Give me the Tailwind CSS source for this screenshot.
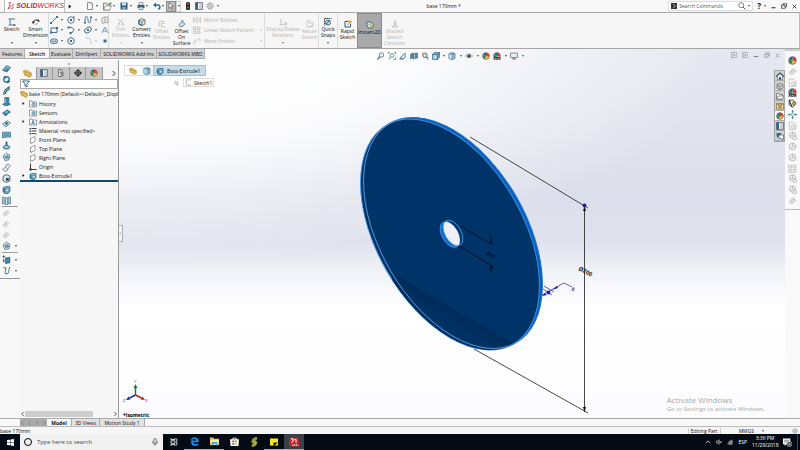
<!DOCTYPE html>
<html lang="en">

<head>
    <meta charset="UTF-8" />
    <meta name="viewport" content="width=device-width, initial-scale=1" />
    <title>base 170mm - SOLIDWORKS</title>
    <script src="https://cdn.jsdelivr.net/npm/@tailwindcss/browser@4"></script>
</head>

<body class="h-screen flex flex-col overflow-hidden bg-[#f5f5f5] font-['Open_Sans','Noto_Sans',sans-serif] text-[5px] leading-[6px] text-[#111]">

    <!-- Icon sprite -->
    <svg class="hidden" aria-hidden="true">
        <symbol id="caret" viewBox="0 0 6 6"><path d="M0 1h6L3 5z" fill="currentColor" /></symbol>
        <symbol id="right" viewBox="0 0 6 6"><path d="M1 0v6l4-3z" fill="currentColor" /></symbol>
        <symbol id="chev-l" viewBox="0 0 6 6"><path d="M4 0L1 3l3 3" fill="none" stroke="currentColor" /></symbol>
        <symbol id="chev-r" viewBox="0 0 6 6"><path d="M2 0l3 3-3 3" fill="none" stroke="currentColor" /></symbol>
        <symbol id="new" viewBox="0 0 16 16"><path d="M3 1h7l3 3v11H3z" fill="#fff" stroke="#555" stroke-width="1.3" /><path d="M10 1v3h3" fill="none" stroke="#555" /></symbol>
        <symbol id="open" viewBox="0 0 16 16"><path d="M1 2h5l1 2h5v10H1z" fill="#f6f3df" stroke="#555" stroke-width="1.3" /><path d="M4 7h11l-3 7H1z" fill="#fff" stroke="#555" /><path d="M10 6c0-4 2-5 4-5l-1-1 3 2-3 3V3c-1 0-1 1-1 3z" fill="#3b9a3b" /></symbol>
        <symbol id="save" viewBox="0 0 16 16"><path d="M1 1h14v14H1z" fill="#2d5f7f" /><path d="M4 1h8v6H4z" fill="#d5e5ee" /><path d="M5 10h6v5H5z" fill="#8eb4c9" /></symbol>
        <symbol id="print" viewBox="0 0 16 16"><path d="M4 1h8v5H4z" fill="#fff" stroke="#345" /><path d="M1 6h14v6H1z" fill="#2f6a89" /><path d="M4 10h8v5H4z" fill="#dce9f0" stroke="#345" /></symbol>
        <symbol id="undo" viewBox="0 0 16 16"><path d="M3 6h7c5 0 5 8 0 8" fill="none" stroke="#2c6e93" stroke-width="3" /><path d="M0 6l6-5v10z" fill="#2c6e93" /></symbol>
        <symbol id="cursor" viewBox="0 0 16 16"><path d="M4 1v12l3-3 2 5 2-1-2-5h4z" fill="#fff" stroke="#444" stroke-width="1.2" /></symbol>
        <symbol id="traffic" viewBox="0 0 16 16"><rect x="4" y="0" width="8" height="16" rx="3" fill="#222" /><circle cx="8" cy="4" r="2.5" fill="#c73a30" /><circle cx="8" cy="11" r="2.5" fill="#3d7f48" /></symbol>
        <symbol id="list" viewBox="0 0 16 16"><path d="M1 1h14v14H1z" fill="#fff" stroke="#557" stroke-width="1.5" /><path d="M1 1h5v14H1z" fill="#2f6580" /><path d="M8 4h6M8 8h6M8 12h6" stroke="#678" stroke-width="1.4" /></symbol>
        <symbol id="gear" viewBox="0 0 16 16"><circle cx="8" cy="8" r="6" fill="none" stroke="#777" stroke-width="2" stroke-dasharray="3 1" /><circle cx="8" cy="8" r="3" fill="none" stroke="#777" stroke-width="1.4" /></symbol>
        <symbol id="glass" viewBox="0 0 16 16"><circle cx="6.500" cy="6.500" r="5" fill="none" stroke="#555" stroke-width="1.5" /><path d="M10 10l5 5" stroke="#555" stroke-width="2" /></symbol>
        <symbol id="min" viewBox="0 0 16 16"><path d="M2 12h12" stroke="currentColor" stroke-width="3" /></symbol>
        <symbol id="restore" viewBox="0 0 16 16"><path d="M1 6h10v8H1zM5 6V2h10v8h-4" fill="none" stroke="currentColor" stroke-width="1.8" /></symbol>
        <symbol id="close" viewBox="0 0 16 16"><path d="M2 2l12 12M14 2L2 14" stroke="currentColor" stroke-width="2.400" /></symbol>
        <symbol id="pane" viewBox="0 0 16 16"><path d="M1 1h14v14H1zM5 1v14" fill="none" stroke="currentColor" stroke-width="1.4" /><path d="M8 5v6l4-3z" fill="currentColor" /></symbol>
        <symbol id="sketch" viewBox="0 0 16 16"><path d="M14 2H4v12h10M1 2h3M1 14h3" fill="none" stroke="#2f6f90" stroke-width="1.8" /><path d="M11 14h4" stroke="#222" stroke-width="2" /></symbol>
        <symbol id="dim" viewBox="0 0 16 16"><path d="M2 9a7 6 0 0 1 12-3" fill="none" stroke="#222" stroke-width="2" /><path d="M1 12V6l5 3zM12 2l4 5h-5z" fill="#222" /><path d="M7 14l4-4" stroke="#2f6f90" stroke-width="1.6" /></symbol>
        <symbol id="line" viewBox="0 0 16 16"><path d="M2 14L14 2" stroke="#34546a" stroke-width="1.6" /><path d="M0 12h4v4H0zM12 0h4v4h-4z" fill="#2f6f90" /></symbol>
        <symbol id="circle" viewBox="0 0 16 16"><circle cx="8" cy="8" r="6.500" fill="none" stroke="#34607a" stroke-width="1.6" /><path d="M6 6h4v4H6zM12 1h3v3h-3z" fill="#2f6f90" /></symbol>
        <symbol id="spline" viewBox="0 0 16 16"><path d="M2 14C2-6 7 0 8 8s6 9 6-6" fill="none" stroke="#34607a" stroke-width="1.8" /><path d="M0 12h4v3H0zM12 1h4v3h-4z" fill="#2f6f90" /></symbol>
        <symbol id="planes" viewBox="0 0 16 16"><path d="M2 4l6-2v11l-6 2zM8 2h6v11H8" fill="none" stroke="#888" stroke-width="1.4" /><path d="M4 8h8" stroke="#aaa" stroke-width="1.2" /></symbol>
        <symbol id="rect" viewBox="0 0 16 16"><path d="M2 4h12v9H2z" fill="none" stroke="#34607a" stroke-width="1.8" /><path d="M0 11h4v4H0zM12 2h4v4h-4z" fill="#2f6f90" /></symbol>
        <symbol id="arc" viewBox="0 0 16 16"><path d="M3 3c12-2 14 9 4 11" fill="none" stroke="#34607a" stroke-width="1.8" /><path d="M1 1h4v4H1zM5 12h4v4H5z" fill="#2f6f90" /></symbol>
        <symbol id="ellipse" viewBox="0 0 16 16"><ellipse cx="8" cy="8" rx="7.500" ry="5" transform="rotate(-35 8 8)" fill="none" stroke="#34607a" stroke-width="1.8" /><path d="M6 6h4v4H6z" fill="#2f6f90" /></symbol>
        <symbol id="letter" viewBox="0 0 16 16"><path d="M2 14L8 2l6 12M4 10h8" fill="none" stroke="#6d93aa" stroke-width="1.8" /></symbol>
        <symbol id="slot" viewBox="0 0 16 16"><rect x="1" y="4" width="14" height="9" rx="4.500" fill="#c9dce6" stroke="#34607a" stroke-width="1.6" /><path d="M4 8.500h8" stroke="#2f6f90" stroke-width="2" stroke-dasharray="3 2" /></symbol>
        <symbol id="polygon" viewBox="0 0 16 16"><path d="M8 1l6 3.500v7L8 15l-6-3.500v-7z" fill="none" stroke="#34607a" stroke-width="1.8" /><path d="M6 6h4v4H6z" fill="#2f6f90" /></symbol>
        <symbol id="fillet" viewBox="0 0 16 16"><path d="M2 2h4c6 0 8 3 8 12" fill="none" stroke="#bbb" stroke-width="1.6" /></symbol>
        <symbol id="point" viewBox="0 0 16 16"><path d="M5 5h6v6H5z" fill="#2f6f90" /></symbol>
        <symbol id="trim" viewBox="0 0 16 16"><path d="M2 2l10 9M12 2L3 11" stroke="#c0c0c0" stroke-width="2" /><circle cx="4" cy="13" r="2" fill="none" stroke="#c0c0c0" stroke-width="1.5" /><circle cx="12" cy="13" r="2" fill="none" stroke="#c0c0c0" stroke-width="1.5" /></symbol>
        <symbol id="convert" viewBox="0 0 16 16"><path d="M2 4l6-3 6 3v8l-6 3-6-3zM2 4l6 3 6-3M8 7v8" fill="#dce8ef" stroke="#444" stroke-width="1.3" /><path d="M2 4v8l6 3" fill="none" stroke="#2f6f90" stroke-width="2.500" /></symbol>
        <symbol id="offset" viewBox="0 0 16 16"><path d="M13 3H2v11M13 7H7v7h8" fill="none" stroke="#c4c4c4" stroke-width="2" /></symbol>
        <symbol id="surface" viewBox="0 0 16 16"><path d="M2 9l6-6 6 5-6 6z" fill="#cfe1ea" stroke="#3a6d88" stroke-width="1.6" /><path d="M8 3V0l3 2M3 12l-1 3" stroke="#3a6d88" stroke-width="1.5" fill="none" /></symbol>
        <symbol id="mirror" viewBox="0 0 16 16"><path d="M1 3l5 5-5 5zM15 3l-5 5 5 5zM8 1v14" fill="none" stroke="#bbb" stroke-width="1.5" /></symbol>
        <symbol id="pattern" viewBox="0 0 16 16"><path d="M1 2h5v5H1zM9 2h5v5H9zM1 10h5v5H1zM9 10h5v5H9z" fill="none" stroke="#bbb" stroke-width="1.6" /></symbol>
        <symbol id="move" viewBox="0 0 16 16"><path d="M2 12c0-8 5-8 6-2M9 4h5v5M1 13h4" fill="none" stroke="#bbb" stroke-width="1.6" /></symbol>
        <symbol id="relations" viewBox="0 0 16 16"><path d="M4 2v11M1 13h8M10 8l5 5M15 8v6h-5" fill="none" stroke="#b8b8b8" stroke-width="1.7" /></symbol>
        <symbol id="repair" viewBox="0 0 16 16"><path d="M9 2H2v12h7M5 6h9v6H8l5 3" fill="none" stroke="#c0c0c0" stroke-width="1.7" /></symbol>
        <symbol id="snaps" viewBox="0 0 16 16"><path d="M1 1h14M1 1v14" stroke="#222" stroke-width="1.6" stroke-dasharray="3 1" /><circle cx="8" cy="9" r="5" fill="#cfe3ee" stroke="#245a78" stroke-width="1.8" /><path d="M4 13l8-9" stroke="#222" stroke-width="1.5" /></symbol>
        <symbol id="rapid" viewBox="0 0 16 16"><path d="M13 8v6H2V3h6" fill="none" stroke="#2b5d79" stroke-width="2" /><path d="M6 1h9v7l-3-2-5 5-1-2 4-4z" fill="#e0a336" /></symbol>
        <symbol id="instant" viewBox="0 0 16 16"><path d="M2 2h8l4 5v7H5L2 10z" fill="#cfe4ef" stroke="#24617f" stroke-width="1.7" /><path d="M6 6l8 7" stroke="#e0a336" stroke-width="3" /></symbol>
        <symbol id="contours" viewBox="0 0 16 16"><path d="M2 14l6-6 6 6zM6 6l2-5 3 5-3 4z" fill="#ddd" stroke="#bdbdbd" stroke-width="1.4" /></symbol>
        <!-- heads-up view icons -->
        <symbol id="zoomfit" viewBox="0 0 16 16"><circle cx="9" cy="6" r="4.500" fill="#e7f1f6" stroke="#557b90" stroke-width="1.7" /><path d="M6 9l-5 6" stroke="#557b90" stroke-width="2.500" /></symbol>
        <symbol id="zoomarea" viewBox="0 0 16 16"><circle cx="8" cy="7" r="4" fill="#e7f1f6" stroke="#557b90" stroke-width="1.5" /><path d="M5 10l-4 5M1 4V1h3M12 1h3v3M15 11v4h-4" fill="none" stroke="#557b90" stroke-width="1.6" /></symbol>
        <symbol id="prev" viewBox="0 0 16 16"><path d="M2 12L12 2l1 8-4 4z" fill="#d3e4ed" stroke="#46788f" stroke-width="1.6" /><path d="M1 14h8" stroke="#46788f" stroke-width="2" /></symbol>
        <symbol id="section" viewBox="0 0 16 16"><path d="M1 5l4-3v10l-4 2zM6 3l9-1v10l-9 2z" fill="#4a88a8" stroke="#2d5b73" /><path d="M9 3v10" stroke="#cbe0eb" stroke-width="1.500" /></symbol>
        <symbol id="annot" viewBox="0 0 16 16"><path d="M2 2h9l3 9H5z" fill="#f0dcae" stroke="#b98a45" stroke-width="1.5" /><circle cx="8" cy="7" r="3.500" fill="#eef5f8" stroke="#3b6f8b" stroke-width="1.4" /><path d="M10 10l5 5" stroke="#a05b3a" stroke-width="2" /></symbol>
        <symbol id="cube" viewBox="0 0 16 16"><path d="M1 5l4-4h10v9l-4 5H1z" fill="#7fb0c9" stroke="#2f617b" stroke-width="1.400" /><path d="M1 5h10v10M11 5l4-4" fill="none" stroke="#2f617b" stroke-width="1.400" /><path d="M2 6h8v8H2z" fill="#b7d4e2" /></symbol>
        <symbol id="cube3" viewBox="0 0 16 16"><path d="M8 1l6 2v10l-6 2-6-2V3z" fill="#8db9cf" stroke="#3f7893" stroke-width="1.3" /><path d="M2 3l6 2v10l-6-2z" fill="#d4e6ef" stroke="#3f7893" /><path d="M8 5l6-2" stroke="#3f7893" /></symbol>
        <symbol id="eye" viewBox="0 0 16 16"><path d="M1 8q7-8 14 0-7 7-14 0z" fill="#eee" stroke="#666" stroke-width="1.3" /><circle cx="8" cy="8" r="3" fill="#333" /></symbol>
        <symbol id="ball" viewBox="0 0 16 16"><circle cx="8" cy="8" r="7" fill="#f4f4f4" /><path d="M8 8V1a7 7 0 0 1 6.500 9z" fill="#d34337" /><path d="M8 8l6.500 2A7 7 0 0 1 6 14.700z" fill="#e3b53a" /><path d="M8 8l-2 6.700A7 7 0 0 1 1.500 6z" fill="#3c8b54" /><path d="M8 8L1.500 6A7 7 0 0 1 8 1z" fill="#2f6797" /><circle cx="8" cy="8" r="7" fill="none" stroke="#444" stroke-width=".8" /></symbol>
        <symbol id="scene" viewBox="0 0 16 16"><use href="#ball" /><path d="M0 15l4-5h9l3 5z" fill="#333" /><path d="M4 13h8" stroke="#ddd" stroke-width="1.5" stroke-dasharray="2 1" /></symbol>
        <symbol id="monitor" viewBox="0 0 16 16"><path d="M1 2h14v9H1z" fill="#e4edf2" stroke="#666" stroke-width="1.4" /><path d="M8 11v3M4 14h8" stroke="#666" stroke-width="1.8" /></symbol>
        <!-- feature icons -->
        <symbol id="part" viewBox="0 0 16 16"><path d="M1 4l5-2 4 3 4 2 1 5-4 3-4-3-4-1z" fill="#f0ca55" stroke="#a4781c" stroke-width="1.2" /><path d="M1 4l5 2v5M6 6l4-1M10 9l5-2" fill="none" stroke="#a4781c" /><circle cx="11" cy="11" r="1.800" fill="#fff3c0" stroke="#a4781c" /></symbol>
        <symbol id="f1" viewBox="0 0 16 16"><path d="M1 11l7-8 7 3-6 8z" fill="#4b8fae" stroke="#1f5674" stroke-width="1.3" /><path d="M4 10l5-5 4 2" stroke="#d2e6ef" fill="none" stroke-width="1.3" /></symbol>
        <symbol id="f2" viewBox="0 0 16 16"><circle cx="8" cy="8" r="5" fill="#deedf4" stroke="#3a7897" stroke-width="2.600" /><path d="M3 2l5 1-3 4zM10 15l4-4-5-1z" fill="#1f5674" /></symbol>
        <symbol id="f3" viewBox="0 0 16 16"><path d="M2 13c5 1 3-5 6-6s3-4 6-4" fill="none" stroke="#1f5674" stroke-width="5" /><path d="M2 13c5 1 3-5 6-6s3-4 6-4" fill="none" stroke="#84b7ce" stroke-width="2" /></symbol>
        <symbol id="f4" viewBox="0 0 16 16"><path d="M5 1h7v9l3 3-7 3-7-3 4-2z" fill="#3f86a6" stroke="#1f5674" stroke-width="1.2" /><path d="M6 3v8" stroke="#bedae6" stroke-width="1.5" /></symbol>
        <symbol id="f5" viewBox="0 0 16 16"><path d="M1 9l9-6 5 4-9 7z" fill="#2f7597" stroke="#1f5674" /><path d="M4 10l8-5M7 6l5 4" stroke="#b3d3e1" stroke-width="1.4" /></symbol>
        <symbol id="f12" viewBox="0 0 16 16"><path d="M1 9l8-6 6 4-8 7z" fill="#cfe0e8" stroke="#4b7b92" stroke-width="1.500" /><circle cx="8" cy="8" r="2.500" fill="#3a6d88" /></symbol>
        <symbol id="f6" viewBox="0 0 16 16"><path d="M1 4h14v9l-3-1-11 2z" fill="#86b7cd" stroke="#2a6685" stroke-width="1.300" /><path d="M3 6h10v5H3z" fill="#5a9abb" /></symbol>
        <symbol id="f7" viewBox="0 0 16 16"><path d="M8 1v7" stroke="#1f5674" stroke-width="3" /><path d="M2 10l6-3 6 3-2 4H4z" fill="#9cc6d8" stroke="#1f5674" stroke-width="1.5" /></symbol>
        <symbol id="f8" viewBox="0 0 16 16"><path d="M2 7l6-5 6 4-2 8-7 1z" fill="#e3eff4" stroke="#3c6f88" stroke-width="1.5" /><path d="M5 8l5-2 2 4-5 2z" fill="#6ba5c0" stroke="#2a5c75" /></symbol>
        <symbol id="f9" viewBox="0 0 16 16"><path d="M1 11l5-3 1-4 5-2 3 3-4 4-1 4-5 2z" fill="#e9f1f4" stroke="#5a7c8c" stroke-width="1.4" /><path d="M6 8l4 2" stroke="#5a7c8c" /></symbol>
        <symbol id="f10" viewBox="0 0 16 16"><path d="M2 4l6-3 6 3v8l-6 3-6-3z" fill="#dbe8ee" stroke="#2b4c5d" stroke-width="1.5" /><path d="M7 7h5v5H7z" fill="#23495e" /></symbol>
        <symbol id="f11" viewBox="0 0 16 16"><path d="M1 2h3v12H1zM6 3h4v12H6zM12 2h3v12h-3z" fill="#d5e6ee" stroke="#3b6c85" stroke-width="1.3" /></symbol>
        <symbol id="gray" viewBox="0 0 16 16"><path d="M2 10l7-7 5 4-7 7z" fill="#e8e8e8" stroke="#b4b4b4" stroke-width="1.5" /><path d="M5 10l5-4" stroke="#b4b4b4" stroke-width="1.5" /></symbol>
        <symbol id="grayball" viewBox="0 0 16 16"><circle cx="8" cy="7" r="5.500" fill="#efefef" stroke="#b2b2b2" stroke-width="1.4" /><path d="M8 2v5l5 2M8 7l-5 3" stroke="#b2b2b2" fill="none" stroke-width="1.3" /><path d="M9 10h6v5H9z" fill="#f8f8f8" stroke="#b2b2b2" stroke-width="1.300" /></symbol>
        <symbol id="grayorb" viewBox="0 0 16 16"><circle cx="8" cy="8" r="6" fill="#efefef" stroke="#b2b2b2" stroke-width="1.4" /><path d="M8 2v6l6 1M8 8l-5 4" stroke="#b2b2b2" fill="none" stroke-width="1.3" /></symbol>
        <symbol id="graydoc" viewBox="0 0 16 16"><path d="M2 2h8l4 4v9H2z" fill="#f4f4f4" stroke="#bcbcbc" stroke-width="1.4" /><circle cx="9" cy="10" r="3" fill="none" stroke="#b4b4b4" stroke-width="1.4" /></symbol>
        <symbol id="curve" viewBox="0 0 16 16"><path d="M2 3h4c3 0-4 11 2 11s3-9 6-12" fill="none" stroke="#4d7c93" stroke-width="1.8" /></symbol>
        <symbol id="extrude" viewBox="0 0 16 16"><path d="M2 5l4-2h8v8l-3 4H5l-3-3z" fill="#7db3cc" stroke="#2a6685" stroke-width="1.5" /><path d="M7 7h5v5H7z" fill="#e4f1f7" stroke="#2a6685" /><path d="M2 5v7l3 3V6z" fill="#2f7597" /></symbol>
        <symbol id="refgeo" viewBox="0 0 16 16"><path d="M1 3h4M3 1v4" stroke="#1f5674" stroke-width="2" /><path d="M6 5l8-1v10l-8 1z" fill="#3f86a6" stroke="#1f5674" /><path d="M3 7v6" stroke="#1f5674" stroke-width="2" /></symbol>
        <symbol id="confs" viewBox="0 0 16 16"><path d="M3 1h7v14H3z" fill="#f2f2f2" stroke="#555" stroke-width="1.4" /><path d="M5 4h3M5 7h3M8 8l6 6M8 14V8h6" fill="none" stroke="#555" stroke-width="1.4" /></symbol>
        <symbol id="target" viewBox="0 0 16 16"><circle cx="8" cy="8" r="5" fill="none" stroke="#222" stroke-width="2" /><path d="M8 0v16M0 8h16" stroke="#222" stroke-width="2" /></symbol>
        <symbol id="funnel" viewBox="0 0 16 16"><path d="M1 2h14L10 8v6l-4-2V8z" fill="#eaf2f6" stroke="#2c5f7b" stroke-width="1.8" /></symbol>
        <symbol id="folder" viewBox="0 0 16 16"><path d="M1 2h5l1 2h8v10H1z" fill="#fff" stroke="#667" stroke-width="1.3" /><circle cx="9" cy="9" r="3.300" fill="#d4e5ee" stroke="#2b5b75" stroke-width="1.400" /><path d="M9 7v2l2-1" stroke="#2b5b75" fill="none" /></symbol>
        <symbol id="folderA" viewBox="0 0 16 16"><path d="M1 2h5l1 2h8v10H1z" fill="#fff" stroke="#667" stroke-width="1.3" /><path d="M5 13l3-8 3 8M6 10h4" fill="none" stroke="#2b6f9b" stroke-width="1.6" /></symbol>
        <symbol id="material" viewBox="0 0 16 16"><path d="M5 3h10M5 8h10M5 13h6" stroke="#444" stroke-width="2" /><path d="M1 2h3v3H1zM1 7h3v3H1zM1 12h3v3H1z" fill="#2b5b75" /><path d="M11 12h4v3h-4z" fill="#4f9a50" /></symbol>
        <symbol id="plane" viewBox="0 0 16 16"><path d="M3 5l9-4v10l-9 4z" fill="#fff" stroke="#666" stroke-width="1.5" stroke-dasharray="5 1" /></symbol>
        <symbol id="origin" viewBox="0 0 16 16"><path d="M3 1v12h12" fill="none" stroke="#222" stroke-width="1.8" /><path d="M1 11h4v4H1z" fill="#222" /></symbol>
        <!-- task pane icons -->
        <symbol id="home" viewBox="0 0 16 16"><path d="M3 7v8h10V7" fill="#fff" stroke="#335" /><path d="M0 9l8-7 8 7" fill="none" stroke="#255d80" stroke-width="2.600" /><path d="M6 10h4v5H6z" fill="#255d80" /></symbol>
        <symbol id="library" viewBox="0 0 16 16"><path d="M2 5l6-3 6 3v7l-6 3-6-3z" fill="#ddd" stroke="#555" stroke-width="1.3" /><path d="M2 5l6 3 6-3M8 8v7M4 9l2 1" stroke="#555" fill="none" stroke-width="1.3" /></symbol>
        <symbol id="folderopen" viewBox="0 0 16 16"><path d="M1 3h5l1 2h6v9H1z" fill="#fff" stroke="#555" stroke-width="1.3" /><path d="M4 8h12l-3 6H1z" fill="#fff" stroke="#555" stroke-width="1.300" /></symbol>
        <symbol id="palette" viewBox="0 0 16 16"><path d="M1 3h14v11H1z" fill="#f3e2a6" stroke="#6c6039" stroke-width="1.3" /><circle cx="8" cy="9" r="3" fill="#d8a63a" stroke="#594a1f" /><path d="M3 5h3M10 5h3" stroke="#594a1f" stroke-width="1.5" /></symbol>
        <symbol id="forum" viewBox="0 0 16 16"><path d="M1 2h9v7H5l-3 3V9H1z" fill="#2f6f90" /><path d="M6 6h9v7h-1v3l-3-3H6z" fill="#fff" stroke="#345" stroke-width="1.2" /></symbol>
        <symbol id="compass" viewBox="0 0 16 16"><path d="M8 0v16M0 8h16" stroke="#5a8ca3" stroke-width="1.600" /><path d="M8 0l2 3H6zM8 16l2-3H6zM0 8l3-2v4zM16 8l-3-2v4z" fill="#2c6e8c" /><circle cx="8" cy="8" r="2.500" fill="#fff" stroke="#2c6e8c" /></symbol>
        <symbol id="decal" viewBox="0 0 16 16"><path d="M2 2h7l5 5-6 8-6-5z" fill="#eee" stroke="#333" stroke-width="1.4" /><path d="M2 2l5 12" stroke="#333" stroke-width="2" /><circle cx="11" cy="8" r="3" fill="#d6a63a" stroke="#333" /></symbol>
        <!-- taskbar icons -->
        <symbol id="win" viewBox="0 0 16 16"><path d="M0 2.500l7-1v6H0zM8 1.300L16 0v7.500H8zM0 8.500h7v6l-7-1zM8 8.500h8V16l-8-1.300z" fill="#fff" /></symbol>
        <symbol id="mic" viewBox="0 0 16 16"><rect x="5.500" y="1" width="5" height="9" rx="2.500" fill="none" stroke="#444" stroke-width="1.4" /><path d="M3 7v1c0 6 10 6 10 0V7M8 12v3" fill="none" stroke="#444" stroke-width="1.4" /></symbol>
        <symbol id="taskview" viewBox="0 0 16 16"><path d="M2 0v3h8V0M2 16v-3h8v3M2 5.500h8v5H2zM13.500 1v14" fill="none" stroke="#fff" stroke-width="1.6" /></symbol>
        <symbol id="edge" viewBox="0 0 16 16"><path d="M.5 7C2-2 15-1.500 15.500 7v2.500H5.500c.5 3.500 5.500 4 9 2v3C9 17 1.500 15.500 2 9c.2-2.500 1.700-4 4-5.300C5 5 5 6 5 6.500h6C11 2 4 2 .5 7z" fill="#1e8de8" /></symbol>
        <symbol id="explorer" viewBox="0 0 16 16"><path d="M0 1h6l1 2h9v11H0z" fill="#e8c65b" /><path d="M1 5h14v9H1z" fill="#faeaa8" /><path d="M3 9h10v6h-3v-3H6v3H3z" fill="#4ba0cf" /></symbol>
        <symbol id="store" viewBox="0 0 16 16"><path d="M5 5V2h6v3" fill="none" stroke="#fff" stroke-width="1.5" /><path d="M0 4h16l-1 12H1z" fill="#fff" /><path d="M4 6h3.500v3.500H4z" fill="#e25536" /><path d="M8.500 6H12v3.500H8.500z" fill="#7eba3a" /><path d="M4 10.500h3.500V14H4z" fill="#38a0e2" /><path d="M8.500 10.500H12V14H8.500z" fill="#f2bc30" /></symbol>
        <symbol id="snake" viewBox="0 0 16 16"><path d="M12 0L6 3 4 8l4 2-3 2v4l6-3 2-5-4-2 3-2z" fill="#8d9630" stroke="#b5bb42" stroke-width="1" /><path d="M7 6l4 3-4 4" fill="none" stroke="#dfe36d" /></symbol>
        <symbol id="note" viewBox="0 0 16 16"><path d="M0 1h16v14H0z" fill="#fbe62a" /><path d="M7 15V9h9L9 15z" fill="#141a1c" /></symbol>
        <symbol id="swapp" viewBox="0 0 16 16"><path d="M3 1l11 0 2 4v10H4L0 12V4z" fill="#c2242c" /><path d="M3 3c6-1 4 4 1 6M9 4c5-1 0 3 3 5" fill="none" stroke="#fff" stroke-width="1.800" /><path d="M5 13h10" stroke="#eee" stroke-width="2" stroke-dasharray="2 1" /></symbol>
        <symbol id="up" viewBox="0 0 16 16"><path d="M2 11l6-6 6 6" fill="none" stroke="#eee" stroke-width="2" /></symbol>
        <symbol id="mute" viewBox="0 0 16 16"><path d="M1 6h3l4-4v12l-4-4H1z" fill="none" stroke="#fff" stroke-width="1.6" /><path d="M10 6l5 5M15 6l-5 5" stroke="#fff" stroke-width="1.600" /></symbol>
        <symbol id="wifi" viewBox="0 0 16 16"><path d="M1 15A14 14 0 0 1 15 1v14z" fill="#666" /><path d="M6 15a9 9 0 0 1 9-9M10 15a5 5 0 0 1 5-5" fill="none" stroke="#ddd" stroke-width="1.4" /></symbol>
        <symbol id="notif" viewBox="0 0 16 16"><path d="M0 1h13v10H6l-3 3v-3H0z" fill="#fff" /><path d="M2 4h9M2 7h9" stroke="#222" /><circle cx="11.500" cy="11" r="4.500" fill="#222" stroke="#ddd" /><path d="M12 13V8.500L9.500 12H13" fill="none" stroke="#fff" /></symbol>
    </svg>

    <!-- Title bar -->
    <header class="h-[13px] shrink-0 flex items-center bg-[#f8f8f8] border-b border-[#a8a8a8]">
        <div class="ml-1 w-[61px] h-[13px] flex items-center gap-px pl-[2px] bg-white border-x border-b border-[#bbb] text-[#c3202b]">
            <svg class="w-[13px] h-[12px]" viewBox="0 0 26 24" fill="none" stroke="#c3202b" stroke-width="2.400"><path d="M4 3l8-2-3 6M3 21c8-1 13-12 3-11M3 21l4-8M23 8c-6-2-9 2-5 5s3 8-5 7" /></svg>
            <span class="text-[7px] leading-[8px] italic font-['Liberation_Sans',sans-serif]"><b>SOLID</b>WORKS</span>
        </div>
        <button class="ml-[3px] w-[4px]" aria-label="Expand menu"><svg class="w-[4px] h-[5px]"><use href="#right" /></svg></button>
        <nav class="ml-[14px] flex items-center gap-[5px]" aria-label="Quick access">
            <button class="flex items-center gap-[2px]" aria-label="New"><svg class="size-[8px]"><use href="#new" /></svg><svg class="size-[2px]"><use href="#caret" /></svg></button>
            <button class="flex items-center gap-[1px]" aria-label="Open"><svg class="size-[9px]"><use href="#open" /></svg><svg class="size-[2px]"><use href="#caret" /></svg></button>
            <button class="flex items-center gap-[2px]" aria-label="Save"><svg class="size-[8px]"><use href="#save" /></svg><svg class="size-[2px]"><use href="#caret" /></svg></button>
            <button class="flex items-center gap-[1px]" aria-label="Print"><svg class="size-[8px]"><use href="#print" /></svg><svg class="size-[2px]"><use href="#caret" /></svg></button>
            <button class="flex items-center gap-[1px]" aria-label="Undo"><svg class="size-[8px]"><use href="#undo" /></svg><svg class="size-[2px]"><use href="#caret" /></svg></button>
        </nav>
        <button class="ml-[2px] h-[11px] flex items-center" aria-label="Select"><span class="h-[11px] w-[10px] bg-[#bcbcbc] border border-[#888] flex items-center justify-center"><svg class="size-[8px]"><use href="#cursor" /></svg></span><span class="h-[11px] w-[5px] border border-[#ccc] flex items-center justify-center"><svg class="size-[2px]"><use href="#caret" /></svg></span></button>
        <nav class="ml-[3px] flex items-center gap-[3px]" aria-label="Tools">
            <button aria-label="Rebuild"><svg class="size-[8px]"><use href="#traffic" /></svg></button>
            <button aria-label="File properties"><svg class="size-[8px]"><use href="#list" /></svg></button>
            <button class="flex items-center gap-[3px]" aria-label="Options"><svg class="size-[8px]"><use href="#gear" /></svg><svg class="size-[2px]"><use href="#caret" /></svg></button>
        </nav>
        <h1 class="flex-1 text-center">base 170mm *</h1>
        <div class="w-[85px] h-[10px] flex items-center gap-[2px] px-[2px] bg-white border border-[#ddd]">
            <span class="w-[6px] h-[6px] bg-[#333] text-white flex items-center justify-center"><svg class="size-[4px]"><use href="#chev-r" /></svg></span>
            <input class="flex-1 min-w-0 outline-none placeholder:text-[#555]" type="text" placeholder="Search Commands" aria-label="Search Commands" />
            <button class="flex items-center gap-[2px]" aria-label="Search"><svg class="size-[8px]"><use href="#glass" /></svg><svg class="size-[2px]"><use href="#caret" /></svg></button>
        </div>
        <div class="ml-[4px] mr-[3px] flex items-center gap-[5px]">
            <button class="flex items-center gap-[3px] text-[8px] font-bold" aria-label="Help">?<svg class="size-[2px]"><use href="#caret" /></svg></button>
            <button aria-label="Minimize"><svg class="size-[5px]"><use href="#min" /></svg></button>
            <button aria-label="Restore"><svg class="size-[6px]"><use href="#restore" /></svg></button>
            <button aria-label="Close"><svg class="size-[5px]"><use href="#close" /></svg></button>
        </div>
    </header>

    <!-- Ribbon -->
    <section class="h-[36px] shrink-0 flex bg-[#f6f6f6] border-b border-[#a5a5a5] text-center" aria-label="Sketch ribbon">
        <button class="w-[23px] h-full pt-[5px] pb-[4px] flex flex-col items-center"><svg class="size-[8px]"><use href="#sketch" /></svg>Sketch<svg class="mt-auto size-[2px]"><use href="#caret" /></svg></button>
        <button class="w-[26px] h-full pt-[5px] pb-[4px] flex flex-col items-center border-r border-[#ddd]"><svg class="size-[8px]"><use href="#dim" /></svg><span>Smart<br>Dimension</span><svg class="mt-auto size-[2px]"><use href="#caret" /></svg></button>
        <div class="w-[60px] h-full px-px py-[2px] grid grid-cols-[17px_17px_17px_8px] grid-rows-3 items-center border-r border-[#ddd]">
            <button class="flex items-center gap-[3px]" aria-label="Line"><svg class="size-[8px]"><use href="#line" /></svg><svg class="size-[2px]"><use href="#caret" /></svg></button>
            <button class="flex items-center gap-[3px]" aria-label="Circle"><svg class="size-[8px]"><use href="#circle" /></svg><svg class="size-[2px]"><use href="#caret" /></svg></button>
            <button class="flex items-center gap-[3px]" aria-label="Spline"><svg class="size-[8px]"><use href="#spline" /></svg><svg class="size-[2px]"><use href="#caret" /></svg></button>
            <button aria-label="Plane"><svg class="size-[8px]"><use href="#planes" /></svg></button>
            <button class="flex items-center gap-[3px]" aria-label="Rectangle"><svg class="size-[8px]"><use href="#rect" /></svg><svg class="size-[2px]"><use href="#caret" /></svg></button>
            <button class="flex items-center gap-[3px]" aria-label="Arc"><svg class="size-[8px]"><use href="#arc" /></svg><svg class="size-[2px]"><use href="#caret" /></svg></button>
            <button class="flex items-center gap-[3px]" aria-label="Ellipse"><svg class="size-[8px]"><use href="#ellipse" /></svg><svg class="size-[2px]"><use href="#caret" /></svg></button>
            <button aria-label="Text"><svg class="size-[8px]"><use href="#letter" /></svg></button>
            <button class="flex items-center gap-[3px]" aria-label="Slot"><svg class="size-[8px]"><use href="#slot" /></svg><svg class="size-[2px]"><use href="#caret" /></svg></button>
            <button aria-label="Polygon"><svg class="size-[8px]"><use href="#polygon" /></svg></button>
            <button class="flex items-center gap-[3px]" aria-label="Fillet"><svg class="size-[8px]"><use href="#fillet" /></svg><svg class="size-[2px] text-[#aaa]"><use href="#caret" /></svg></button>
            <button aria-label="Point"><svg class="size-[8px]"><use href="#point" /></svg></button>
        </div>
        <button class="w-[23px] h-full pt-[5px] pb-[4px] flex flex-col items-center text-[#b5b5b5]"><svg class="size-[8px]"><use href="#trim" /></svg><span>Trim<br>Entities</span><svg class="mt-auto size-[2px]"><use href="#caret" /></svg></button>
        <button class="w-[19px] h-full pt-[5px] pb-[4px] flex flex-col items-center"><svg class="size-[8px]"><use href="#convert" /></svg><span>Convert<br>Entities</span><svg class="mt-auto size-[2px]"><use href="#caret" /></svg></button>
        <button class="w-[21px] h-full pt-[7px] flex flex-col items-center text-[#b5b5b5]"><svg class="size-[8px]"><use href="#offset" /></svg><span>Offset<br>Entities</span></button>
        <button class="w-[19px] h-full pt-[7px] flex flex-col items-center"><svg class="size-[8px]"><use href="#surface" /></svg><span>Offset<br>On<br>Surface</span></button>
        <div class="w-[74px] h-full py-[2px] px-[2px] grid grid-rows-3 items-center border-r border-[#ddd] text-[#b0b0b0]">
            <button class="flex items-center gap-[3px]"><svg class="size-[8px]"><use href="#mirror" /></svg>Mirror Entities</button>
            <button class="flex items-center gap-[3px]"><svg class="size-[8px]"><use href="#pattern" /></svg>Linear Sketch Pattern<svg class="ml-auto size-[2px]"><use href="#caret" /></svg></button>
            <button class="flex items-center gap-[3px]"><svg class="size-[8px]"><use href="#move" /></svg>Move Entities<svg class="ml-auto size-[2px]"><use href="#caret" /></svg></button>
        </div>
        <button class="w-[36px] h-full pt-[5px] pb-[4px] flex flex-col items-center text-[#b5b5b5]"><svg class="size-[8px]"><use href="#relations" /></svg><span>Display/Delete<br>Relations</span><svg class="mt-auto size-[2px] text-[#444]"><use href="#caret" /></svg></button>
        <button class="w-[18px] h-full pt-[7px] flex flex-col items-center border-r border-[#ddd] text-[#b5b5b5]"><svg class="size-[8px]"><use href="#repair" /></svg><span>Repair<br>Sketch</span></button>
        <button class="w-[19px] h-full pt-[5px] pb-[4px] flex flex-col items-center border-r border-[#ddd]"><svg class="size-[8px]"><use href="#snaps" /></svg><span>Quick<br>Snaps</span><svg class="mt-auto size-[2px]"><use href="#caret" /></svg></button>
        <button class="w-[19px] h-full pt-[7px] flex flex-col items-center"><svg class="size-[8px]"><use href="#rapid" /></svg><span>Rapid<br>Sketch</span></button>
        <button class="w-[25px] h-full pt-[7px] flex flex-col items-center bg-[#a9a9a9] border border-[#8c8c8c]"><svg class="size-[8px]"><use href="#instant" /></svg>Instant2D</button>
        <button class="w-[25px] h-full pt-[7px] flex flex-col items-center text-[#b5b5b5]"><svg class="size-[8px]"><use href="#contours" /></svg><span>Shaded<br>Sketch<br>Contours</span></button>
        <div class="flex-1 border-r border-[#bbb]"></div>
    </section>

    <!-- Workspace -->
    <main class="flex-1 min-h-0 flex flex-col bg-[radial-gradient(ellipse_75%_58%_at_15%_0%,#fff_0%,#ffffffe6_45%,#ffffff00_100%),linear-gradient(to_bottom,#e6e8f1_0%,#dcdfeb_40%,#e0e3ee_53%,#f2f3f8_61%,#ffffff_70%,#fcfcfe_100%)]">
        <div class="h-[11px] shrink-0 flex">
            <nav class="h-[10px] flex bg-[#d2d2d2] [&>button]:border-r [&>button]:border-b [&>button]:border-[#aaa] [&>button]:text-center" aria-label="Command manager">
                <button class="w-[25px]">Features</button>
                <button class="w-[25px] bg-[#f8f8f8] font-semibold">Sketch</button>
                <button class="w-[23px]">Evaluate</button>
                <button class="w-[28px]">DimXpert</button>
                <button class="w-[56px]">SOLIDWORKS Add-Ins</button>
                <button class="w-[48px]">SOLIDWORKS MBD</button>
            </nav>
            <div class="grow-[5]"></div>
            <nav class="pt-[2px] flex items-center gap-[3px]" aria-label="View">
                <button aria-label="Zoom to fit"><svg class="size-[8px]"><use href="#zoomfit" /></svg></button>
                <button aria-label="Zoom to area"><svg class="size-[8px]"><use href="#zoomarea" /></svg></button>
                <button aria-label="Previous view"><svg class="size-[8px]"><use href="#prev" /></svg></button>
                <button aria-label="Section view"><svg class="size-[8px]"><use href="#section" /></svg></button>
                <button aria-label="Annotation views"><svg class="size-[8px]"><use href="#annot" /></svg></button>
                <button class="flex items-center gap-[3px]" aria-label="View orientation"><svg class="size-[8px]"><use href="#cube" /></svg><svg class="size-[2px]"><use href="#caret" /></svg></button>
                <button class="flex items-center gap-[4px]" aria-label="Display style"><svg class="size-[8px]"><use href="#cube3" /></svg><svg class="size-[2px]"><use href="#caret" /></svg></button>
                <button class="flex items-center gap-[4px]" aria-label="Hide items"><svg class="size-[8px]"><use href="#eye" /></svg><svg class="size-[2px]"><use href="#caret" /></svg></button>
                <button aria-label="Edit appearance"><svg class="size-[8px]"><use href="#ball" /></svg></button>
                <button class="flex items-center gap-[4px]" aria-label="Apply scene"><svg class="size-[8px]"><use href="#scene" /></svg><svg class="size-[2px]"><use href="#caret" /></svg></button>
                <button class="flex items-center gap-[4px]" aria-label="View settings"><svg class="size-[8px]"><use href="#monitor" /></svg><svg class="size-[2px]"><use href="#caret" /></svg></button>
            </nav>
            <div class="grow-[6]"></div>
            <div class="mr-[5px] pt-[1px] flex items-center gap-[5px] text-[#888]">
                <button aria-label="Pane left"><svg class="size-[6px]"><use href="#pane" /></svg></button>
                <button aria-label="Pane right"><svg class="size-[6px]"><use href="#pane" /></svg></button>
                <button aria-label="Minimize document"><svg class="size-[6px]"><use href="#min" /></svg></button>
                <button aria-label="Restore document"><svg class="size-[6px]"><use href="#restore" /></svg></button>
                <button aria-label="Close document"><svg class="size-[5px]"><use href="#close" /></svg></button>
            </div>
            <div class="w-[15px] bg-[#f8f8f8] border-t-2 border-[#ccc]"></div>
        </div>

        <div class="flex-1 min-h-0 flex">
            <!-- Features toolbar -->
            <nav class="w-[20px] shrink-0 pt-[3px] flex flex-col bg-[#f8f8f8] [&>button]:h-[11px] [&>button]:shrink-0 [&>button]:pl-[2px] [&>button]:flex [&>button]:items-center [&>button]:gap-[4px]" aria-label="Features toolbar">
                <button aria-label="Extruded boss"><svg class="size-[9px]"><use href="#f1" /></svg></button>
                <button aria-label="Revolved boss"><svg class="size-[9px]"><use href="#f2" /></svg></button>
                <button aria-label="Swept boss"><svg class="size-[9px]"><use href="#f3" /></svg></button>
                <button aria-label="Lofted boss"><svg class="size-[9px]"><use href="#f4" /></svg></button>
                <button aria-label="Boundary boss"><svg class="size-[9px]"><use href="#f5" /></svg></button>
                <button aria-label="Fillet"><svg class="size-[9px]"><use href="#f12" /></svg></button>
                <button aria-label="Shell"><svg class="size-[9px]"><use href="#f6" /></svg></button>
                <button aria-label="Draft"><svg class="size-[9px]"><use href="#f7" /></svg></button>
                <button aria-label="Rib"><svg class="size-[9px]"><use href="#f8" /></svg></button>
                <button aria-label="Wrap"><svg class="size-[9px]"><use href="#f9" /></svg></button>
                <button aria-label="Intersect"><svg class="size-[9px]"><use href="#f10" /></svg></button>
                <button aria-label="Mirror"><svg class="size-[9px]"><use href="#extrude" /></svg></button>
                <button aria-label="Split"><svg class="size-[9px]"><use href="#f11" /></svg></button>
                <hr class="mx-[2px] border-[#999]" />
                <button aria-label="Linear pattern"><svg class="size-[8px]"><use href="#gray" /></svg></button>
                <button aria-label="Circular pattern"><svg class="size-[8px]"><use href="#gray" /></svg></button>
                <button aria-label="Move face"><svg class="size-[8px]"><use href="#gray" /></svg></button>
                <button aria-label="Hole wizard"><svg class="size-[9px]"><use href="#f8" /></svg><svg class="size-[2px]"><use href="#caret" /></svg></button>
                <hr class="mx-[2px] my-[1px] border-[#999]" />
                <button aria-label="Reference geometry"><svg class="size-[9px]"><use href="#refgeo" /></svg><svg class="size-[2px]"><use href="#caret" /></svg></button>
                <button aria-label="Curves"><svg class="size-[9px]"><use href="#curve" /></svg><svg class="size-[2px]"><use href="#caret" /></svg></button>
                <hr class="mt-[2px] border-[#999]" />
            </nav>

            <!-- Feature manager -->
            <aside class="w-[99px] shrink-0 flex flex-col bg-[#f6f6f6] border-r border-[#999]">
                <div class="h-[7px] shrink-0 flex justify-center items-center"><span class="size-[2px] rounded-full bg-[#999]"></span></div>
                <div class="h-[12px] shrink-0 flex items-center justify-between pr-[2px]">
                    <div class="w-[83px] h-full flex [&>button]:flex-1 [&>button]:flex [&>button]:items-center [&>button]:justify-center [&>button]:border-r [&>button]:border-[#999]">
                        <button aria-label="Feature tree"><svg class="size-[9px]"><use href="#part" /></svg></button>
                        <button class="bg-[#c6c6c6]" aria-label="Properties"><svg class="size-[8px]"><use href="#list" /></svg></button>
                        <button class="bg-[#c6c6c6]" aria-label="Configurations"><svg class="size-[8px]"><use href="#confs" /></svg></button>
                        <button class="bg-[#c6c6c6]" aria-label="DimXpert manager"><svg class="size-[8px]"><use href="#target" /></svg></button>
                        <button class="bg-[#c6c6c6]" aria-label="Display manager"><svg class="size-[8px]"><use href="#ball" /></svg></button>
                    </div>
                    <button aria-label="More tabs"><svg class="size-[5px]"><use href="#chev-r" /></svg></button>
                </div>
                <label class="h-[10px] shrink-0 flex items-center bg-white border border-[#aaa] px-px"><svg class="size-[8px]"><use href="#funnel" /></svg><input class="flex-1 min-w-0 outline-none" type="text" aria-label="Filter tree" /></label>
                <div class="h-[9px] shrink-0 flex items-center gap-px whitespace-nowrap"><svg class="size-[8px] shrink-0"><use href="#part" /></svg>base 170mm (Default&lt;&lt;Default&gt;_Displ</div>
                <ul class="mt-px shrink-0 border-b-2 border-[#15466e] [&>li]:h-[9px] [&>li]:flex [&>li]:items-center [&>li]:gap-[2px] [&>li]:pl-[9px]">
                    <li class="relative"><svg class="absolute left-[2px] size-[3px]"><use href="#right" /></svg><svg class="size-[8px]"><use href="#folder" /></svg>History</li>
                    <li><svg class="size-[8px]"><use href="#folder" /></svg>Sensors</li>
                    <li class="relative"><svg class="absolute left-[2px] size-[3px]"><use href="#right" /></svg><svg class="size-[8px]"><use href="#folderA" /></svg>Annotations</li>
                    <li><svg class="size-[8px]"><use href="#material" /></svg>Material &lt;not specified&gt;</li>
                    <li><svg class="size-[8px]"><use href="#plane" /></svg>Front Plane</li>
                    <li><svg class="size-[8px]"><use href="#plane" /></svg>Top Plane</li>
                    <li><svg class="size-[8px]"><use href="#plane" /></svg>Right Plane</li>
                    <li><svg class="size-[8px]"><use href="#origin" /></svg>Origin</li>
                    <li class="relative"><svg class="absolute left-[2px] size-[3px]"><use href="#right" /></svg><svg class="size-[8px]"><use href="#extrude" /></svg>Boss-Extrude1</li>
                </ul>
                <div class="mt-auto h-[8px] shrink-0 flex items-center justify-between px-px">
                    <svg class="size-[4px]"><use href="#chev-l" /></svg>
                    <span class="w-[68px] h-[6px] mr-[20px] bg-[#cdcdcd]"></span>
                    <svg class="size-[4px]"><use href="#chev-r" /></svg>
                </div>
            </aside>

            <!-- Graphics area -->
            <section class="relative flex-1 min-w-0" aria-label="Graphics area">
                <svg class="absolute inset-0 w-full h-full" viewBox="119 60 666 358" preserveAspectRatio="xMidYMid meet" font-family="Liberation Sans, sans-serif">
                    <defs>
                        <linearGradient id="rim" x1="0" y1="0" x2="0" y2="1">
                            <stop offset="0" stop-color="#0b62bd" />
                            <stop offset="1" stop-color="#06478e" />
                        </linearGradient>
                        <linearGradient id="shade" gradientUnits="userSpaceOnUse" x1="460" y1="308" x2="445" y2="334">
                            <stop offset="0" stop-color="#002a58" />
                            <stop offset="1" stop-color="#003468" />
                        </linearGradient>
                        <clipPath id="face"><ellipse cx="450" cy="234.500" rx="126.500" ry="73" transform="rotate(60 450 234.500)" /></clipPath>
                        <clipPath id="bore"><ellipse cx="450" cy="234.500" rx="14" ry="8" transform="rotate(60 450 234.500)" /></clipPath>
                    </defs>
                    <path d="M470 137L588 208M474 349L588 413" stroke="#333" stroke-width=".9" />
                    <!-- disk: back edge, rim and front face -->
                    <ellipse cx="453" cy="233" rx="126.500" ry="73" transform="rotate(60 453 233)" fill="url(#rim)" stroke="#1470d0" />
                    <ellipse cx="450" cy="234.500" rx="126.500" ry="73" transform="rotate(60 450 234.500)" fill="#003468" stroke="#3f8fe6" />
                    <g clip-path="url(#face)">
                        <path d="M394 274L514 344L490 370L380 310z" fill="url(#shade)" />
                        <ellipse cx="453" cy="233" rx="126.500" ry="73" transform="rotate(60 453 233)" fill="none" stroke="#6aa4e4" stroke-width=".8" />
                    </g>
                    <!-- bore -->
                    <ellipse cx="450" cy="234.500" rx="14" ry="8" transform="rotate(60 450 234.500)" fill="#0d6ccb" stroke="#4d9cf0" stroke-width=".8" />
                    <g clip-path="url(#bore)"><ellipse cx="453" cy="233" rx="14" ry="8" transform="rotate(60 453 233)" fill="#eef0f6" /></g>
                    <ellipse cx="453" cy="233" rx="14" ry="8" transform="rotate(60 453 233)" fill="none" stroke="#4d9cf0" stroke-width=".8" />
                    <!-- dimensions -->
                    <path d="M459 225L494 246M459 246L494 267M491 235v9M491 265v7" stroke="#00122b" stroke-width="1" />
                    <path d="M491 245l-1.500-4h3zM491 265l-1.500 4h3z" fill="#00122b" />
                    <circle cx="491" cy="244.500" r="1" fill="#1a1aa0" />
                    <text x="486" y="254" font-size="5" font-weight="bold" fill="#000c20" transform="rotate(30 486 254)">Ø25</text>
                    <path d="M584.500 206v206" stroke="#333" stroke-width=".9" />
                    <path d="M584.500 206l-1.500 5h3zM584.500 412l-1.500-5h3z" fill="#111" />
                    <circle cx="584.500" cy="205.500" r="1.900" fill="#1c1c9c" />
                    <text x="578" y="270" font-size="6" font-weight="bold" fill="#111" transform="rotate(27 578 270)">Ø200</text>
                    <path d="M542 295l22-12 8 4M544 286l10 6M543 289l9 6" fill="none" stroke="#3a3a90" stroke-width=".8" />
                    <path d="M542 296l5-1-2-2zM552 290l5-4 1 2z" fill="#1c1c9c" />
                    <circle cx="548.500" cy="292.500" r="1.900" fill="#1c1cb0" />
                    <text x="571" y="290" font-size="5" font-weight="bold" fill="#2a2a98" transform="rotate(30 571 290)">5</text>
                    <!-- orientation triad -->
                    <path d="M135.500 395v-8" stroke="#1d7a2b" stroke-width="1.500" /><path d="M135.500 384l-2 4h4z" fill="#1d7a2b" />
                    <path d="M135.500 395l-6 3" stroke="#1b2a9b" stroke-width="1.500" /><path d="M126 400l2.500-3.500 2 3z" fill="#1b2a9b" />
                    <path d="M135.500 395l6 3" stroke="#b3261e" stroke-width="1.500" /><path d="M145 400l-4.500-.5 2-3z" fill="#b3261e" />
                    <g font-size="4"><text x="134" y="383" fill="#1d7a2b">Y</text><text x="123" y="402" fill="#1b2a9b">Z</text><text x="145" y="402" fill="#b3261e">X</text></g>
                </svg>

                <!-- breadcrumb -->
                <nav class="relative pt-[5px] pl-[5px]" aria-label="Selection breadcrumb">
                    <div class="flex h-[11px] items-center">
                        <button class="w-[17px] h-full flex items-center justify-center bg-white/60 border-y border-l border-[#ddd]" aria-label="Part"><svg class="size-[8px]"><use href="#part" /></svg></button>
                        <button class="w-[12px] h-full flex items-center justify-center bg-[#f2f7fa] border-y border-[#ddd]" aria-label="Body"><svg class="size-[8px]"><use href="#cube3" /></svg></button>
                        <button class="h-full pl-[2px] pr-[4px] flex items-center gap-[3px] bg-[#c3dcec] border border-[#9dc2d9]"><svg class="size-[8px]"><use href="#extrude" /></svg>Boss-Extrude1</button>
                    </div>
                    <div class="ml-[50px] mt-[2px] flex items-center gap-[3px]">
                        <svg class="size-[6px]" viewBox="0 0 12 12"><path d="M2 1v7h4M4 4h4v6H5" fill="none" stroke="#999" stroke-width="1.300" /></svg>
                        <button class="h-[9px] px-px flex items-center gap-[2px] bg-white border border-[#ddd]"><svg class="size-[7px]" viewBox="0 0 16 16"><path d="M14 2H3v12h11" fill="none" stroke="#99a" stroke-width="1.500" /></svg>Sketch1</button>
                    </div>
                </nav>

                <button class="absolute left-0 top-[165px] w-[4px] h-[17px] bg-[#f6f6f6] border border-l-0 border-[#aaa] flex items-center" aria-label="Collapse panel"><svg class="size-[3px] text-[#777]"><use href="#chev-l" /></svg></button>

                <!-- task pane -->
                <nav class="absolute right-0 top-[10px] w-[11px] flex flex-col bg-[#d0d0d0] border border-[#a5a5a5] [&>button]:h-[10px] [&>button]:flex [&>button]:items-center [&>button]:justify-center [&>button]:border-b [&>button]:border-[#aaa]" aria-label="Task pane">
                    <button aria-label="Resources"><svg class="size-[8px]"><use href="#home" /></svg></button>
                    <button aria-label="Design library"><svg class="size-[8px]"><use href="#library" /></svg></button>
                    <button aria-label="File explorer"><svg class="size-[8px]"><use href="#folderopen" /></svg></button>
                    <button aria-label="View palette"><svg class="size-[8px]"><use href="#palette" /></svg></button>
                    <button class="bg-white" aria-label="Appearances"><svg class="size-[8px]"><use href="#ball" /></svg></button>
                    <button aria-label="Custom properties"><svg class="size-[8px]"><use href="#list" /></svg></button>
                    <button aria-label="Forum"><svg class="size-[8px]"><use href="#forum" /></svg></button>
                </nav>

                <p class="absolute left-[4px] bottom-0 font-bold text-black">*Isometric</p>
                <div class="absolute right-[20px] bottom-[5px] text-[#a8a8ac]">
                    <p class="text-[8px] leading-[10px]">Activate Windows</p>
                    <p class="text-[6px] leading-[8px]">Go to Settings to activate Windows.</p>
                </div>
            </section>

            <!-- Render toolbar -->
            <div class="w-[15px] shrink-0 bg-[#f9f9f9]">
                <nav class="h-[149px] -mt-[4px] flex flex-col items-center justify-between" aria-label="Render toolbar">
                    <button aria-label="Appearance"><svg class="size-[9px]"><use href="#ball" /></svg></button>
                    <button aria-label="Copy appearance"><svg class="size-[9px]"><use href="#gray" /></svg></button>
                    <button aria-label="Paste appearance"><svg class="size-[9px]"><use href="#graydoc" /></svg></button>
                    <button aria-label="Edit scene"><svg class="size-[9px]"><use href="#scene" /></svg></button>
                    <button aria-label="Edit decal"><svg class="size-[9px]"><use href="#decal" /></svg></button>
                    <button aria-label="Move target"><svg class="size-[9px]"><use href="#compass" /></svg></button>
                    <button aria-label="Preview window"><svg class="size-[9px]"><use href="#graydoc" /></svg></button>
                    <button aria-label="Integrated preview"><svg class="size-[9px]"><use href="#grayball" /></svg></button>
                    <button aria-label="Final render"><svg class="size-[9px]"><use href="#grayorb" /></svg></button>
                    <button aria-label="Render region"><svg class="size-[9px]"><use href="#grayorb" /></svg></button>
                    <button aria-label="Render options"><svg class="size-[9px]"><use href="#pattern" /></svg></button>
                    <button aria-label="Schedule render"><svg class="size-[9px]"><use href="#grayball" /></svg></button>
                    <button aria-label="Recall render"><svg class="size-[9px]"><use href="#grayball" /></svg></button>
                    <button aria-label="Render files"><svg class="size-[9px]"><use href="#gray" /></svg></button>
                </nav>
                <hr class="mt-[4px] border-[#bbb]" />
            </div>
        </div>
    </main>

    <!-- Model tabs -->
    <nav class="h-[8px] shrink-0 pl-[20px] flex bg-[#f8f8f8] border-t border-[#aaa] [&>button]:border-r [&>button]:border-[#aaa] [&>button]:text-center" aria-label="Model tabs">
        <div class="w-[27px] flex items-center justify-around bg-[#aaa] text-[#777]">
            <svg class="size-[4px]"><use href="#chev-l" /></svg><svg class="size-[4px]"><use href="#chev-l" /></svg><svg class="size-[4px]"><use href="#chev-r" /></svg><svg class="size-[4px]"><use href="#chev-r" /></svg>
        </div>
        <button class="w-[25px] font-bold">Model</button>
        <button class="w-[28px] bg-[#e2e2e2]">3D Views</button>
        <button class="w-[45px] bg-[#e2e2e2]">Motion Study 1</button>
    </nav>

    <!-- Status bar -->
    <footer class="h-[8px] shrink-0 flex items-center bg-[#f6f6f6] border-t border-[#bbb]">
        <span>base 170mm</span>
        <span class="ml-auto w-[33px] text-center border-x border-[#ccc]">Editing Part</span>
        <button class="ml-[18px] flex items-center gap-[8px]">MMGS<svg class="size-[2px]"><use href="#caret" /></svg></button>
        <svg class="ml-[28px] mr-[2px] size-[6px]"><use href="#gear" /></svg>
    </footer>

    <!-- Windows taskbar -->
    <footer class="h-[16px] shrink-0 flex items-center bg-[#050b14] text-white">
        <button class="w-[20px] flex justify-center" aria-label="Start"><svg class="size-[7px]"><use href="#win" /></svg></button>
        <label class="w-[143px] h-full flex items-center gap-[5px] pl-[4px] pr-[4px] bg-[#f1f1f1] text-[#444]">
            <span class="size-[8px] rounded-full border border-black"></span>
            <input class="flex-1 min-w-0 text-[6px] outline-none placeholder:text-[#444]" type="text" placeholder="Type here to search" aria-label="Type here to search" />
            <svg class="size-[8px]"><use href="#mic" /></svg>
        </label>
        <nav class="h-full flex pl-px [&>button]:w-[20px] [&>button]:h-full [&>button]:flex [&>button]:items-center [&>button]:justify-center [&>button]:border-b" aria-label="Taskbar">
            <button class="border-transparent" aria-label="Task view"><svg class="size-[8px]"><use href="#taskview" /></svg></button>
            <button class="border-[#76b9ed]" aria-label="Edge"><svg class="size-[9px]"><use href="#edge" /></svg></button>
            <button class="border-[#76b9ed]" aria-label="File Explorer"><svg class="size-[9px]"><use href="#explorer" /></svg></button>
            <button class="border-transparent" aria-label="Store"><svg class="size-[9px]"><use href="#store" /></svg></button>
            <button class="border-transparent" aria-label="App"><svg class="size-[10px]"><use href="#snake" /></svg></button>
            <button class="border-[#76b9ed]" aria-label="Sticky Notes"><svg class="size-[8px]"><use href="#note" /></svg></button>
            <button class="border-[#76b9ed] bg-[#3a4048]" aria-label="SOLIDWORKS"><svg class="size-[10px]"><use href="#swapp" /></svg></button>
        </nav>
        <div class="ml-auto flex items-center gap-[5px]">
            <svg class="size-[6px]"><use href="#up" /></svg>
            <svg class="size-[6px]"><use href="#mute" /></svg>
            <svg class="size-[6px]"><use href="#wifi" /></svg>
            <span>ESP</span>
            <time class="w-[26px] text-center leading-[7px]">3:36 PM<br>11/29/2018</time>
            <svg class="size-[9px]"><use href="#notif" /></svg>
            <span class="w-[3px] h-[16px] border-l border-[#444]"></span>
        </div>
    </footer>

</body>

</html>
